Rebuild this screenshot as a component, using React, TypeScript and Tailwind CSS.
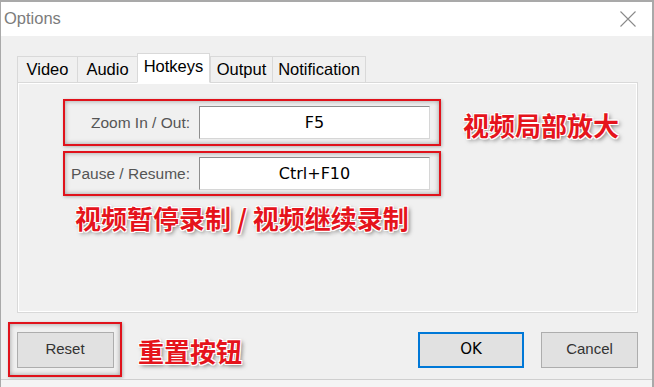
import React from "react";

const tabs = [
  { label: "Video", w: "w-[60px]" },
  { label: "Audio", w: "w-[60px]" },
  { label: "Hotkeys", w: "w-[73px]", active: true },
  { label: "Output", w: "w-[62px]" },
  { label: "Notification", w: "w-[94px]" },
];

const note =
  "font-['Noto_Sans_CJK_SC','Noto_Sans_CJK_TC',sans-serif] font-bold text-[#e5141c] text-[26px] leading-[30px] whitespace-nowrap [text-shadow:-1px_-1px_0_#fff,1px_-1px_0_#fff,-1px_1px_0_#fff,1px_1px_0_#fff,0_-1px_0_#fff,0_1px_0_#fff,2px_2px_4px_rgba(0,0,0,0.55)]";

const redBox =
  "border-2 border-[#e0121b] shadow-[inset_0_0_5px_rgba(0,0,0,0.35),1px_1px_3px_rgba(0,0,0,0.25)]";

function HotkeyRow({
  label,
  value,
  h,
}: {
  label: string;
  value: string;
  h: string;
}) {
  return (
    <div className={`${redBox} w-[378px] ${h} flex items-center`}>
      <div className="w-[125px] text-right font-['Liberation_Sans',Arial,sans-serif] text-[15.5px] text-[#555]">
        {label}
      </div>
      <div className="ml-[9px] w-[231px] h-[33px] bg-white border border-[#d6d6d6] border-t-[#8e8e8e] border-l-[#8e8e8e] flex items-center justify-center font-['DejaVu_Sans',sans-serif] text-[16px] text-black">
        {value}
      </div>
    </div>
  );
}

export default function App() {
  return (
    <div className="w-[654px] h-[387px] bg-[#f0f0f0] border-t-2 border-l border-r-2 border-[#a9a9a9] flex flex-col overflow-hidden">
      {/* title bar */}
      <div className="h-[34px] bg-white flex items-center justify-between pl-[3px] pr-[16px] shrink-0">
        <span className="font-['Liberation_Sans',Arial,sans-serif] text-[16.5px] text-[#7c7c7c] -mt-[1px]">
          Options
        </span>
        <svg width="16" height="16" viewBox="0 0 16 16" className="-mt-[1px]">
          <path d="M0.5 0.5L15.5 15.5M15.5 0.5L0.5 15.5" stroke="#8a8a8a" strokeWidth="1.1" />
        </svg>
      </div>

      {/* body */}
      <div className="flex-1 flex flex-col">
        <div className="pt-[17px] pl-[16px]">
          {/* tabs */}
          <div className="h-[30px] flex items-end -mb-px relative z-10">
            {tabs.map((t, i) => (
              <div
                key={t.label}
                className={`${t.w} flex items-center justify-center font-['Liberation_Sans',Arial,sans-serif] text-[16.5px] text-black border-t border-l border-[#d9d9d9] ${
                  i === tabs.length - 1 ? "border-r" : ""
                } ${
                  t.active
                    ? "h-[30px] bg-white border-r border-b border-b-white pb-[3px]"
                    : "h-[27px] bg-[#f0f0f0] border-b"
                }`}
              >
                {t.label}
              </div>
            ))}
          </div>
          {/* panel */}
          <div className="w-[621px] h-[231px] border border-[#d9d9d9] shadow-[inset_1px_1px_0_#fff,inset_-1px_-1px_0_#fff] bg-[#f0f0f0] pl-[45px] pt-[16px]">
            <div className="flex items-center">
              <HotkeyRow label="Zoom In / Out:" value="F5" h="h-[47px]" />
              <div className={`${note} ml-[22px] mt-[4px]`}>视频局部放大</div>
            </div>
            <div className="mt-[5px]">
              <HotkeyRow label="Pause / Resume:" value="Ctrl+F10" h="h-[45px]" />
            </div>
            <div className={`${note} ml-[12px] mt-[7px]`}>视频暂停录制 / 视频继续录制</div>
          </div>
        </div>

        {/* bottom row */}
        <div className="mt-[9px] pl-[7px] pr-[14px] flex items-center">
          <div className={`${redBox} w-[114px] h-[55px] flex items-center justify-center`}>
            <div className="w-[97px] h-[36px] bg-[#e1e1e1] border border-[#adadad] flex items-center justify-center font-['Liberation_Sans',Arial,sans-serif] text-[15px] text-[#333]">
              Reset
            </div>
          </div>
          <div className={`${note} ml-[16px] mt-[3px]`}>重置按钮</div>
          <div className="ml-auto flex items-center gap-[17px]">
            <div className="w-[106px] h-[36px] bg-[#e1e1e1] border-2 border-[#0078d7] flex items-center justify-center font-['DejaVu_Sans',sans-serif] text-[15px] text-black">
              OK
            </div>
            <div className="w-[97px] h-[36px] bg-[#e1e1e1] border border-[#adadad] flex items-center justify-center font-['Liberation_Sans',Arial,sans-serif] text-[15px] text-[#333]">
              Cancel
            </div>
          </div>
        </div>
        <div className="mt-auto h-[8px] border-t border-[#cfcfcf] bg-[#f4f4f4]" />
      </div>
    </div>
  );
}
